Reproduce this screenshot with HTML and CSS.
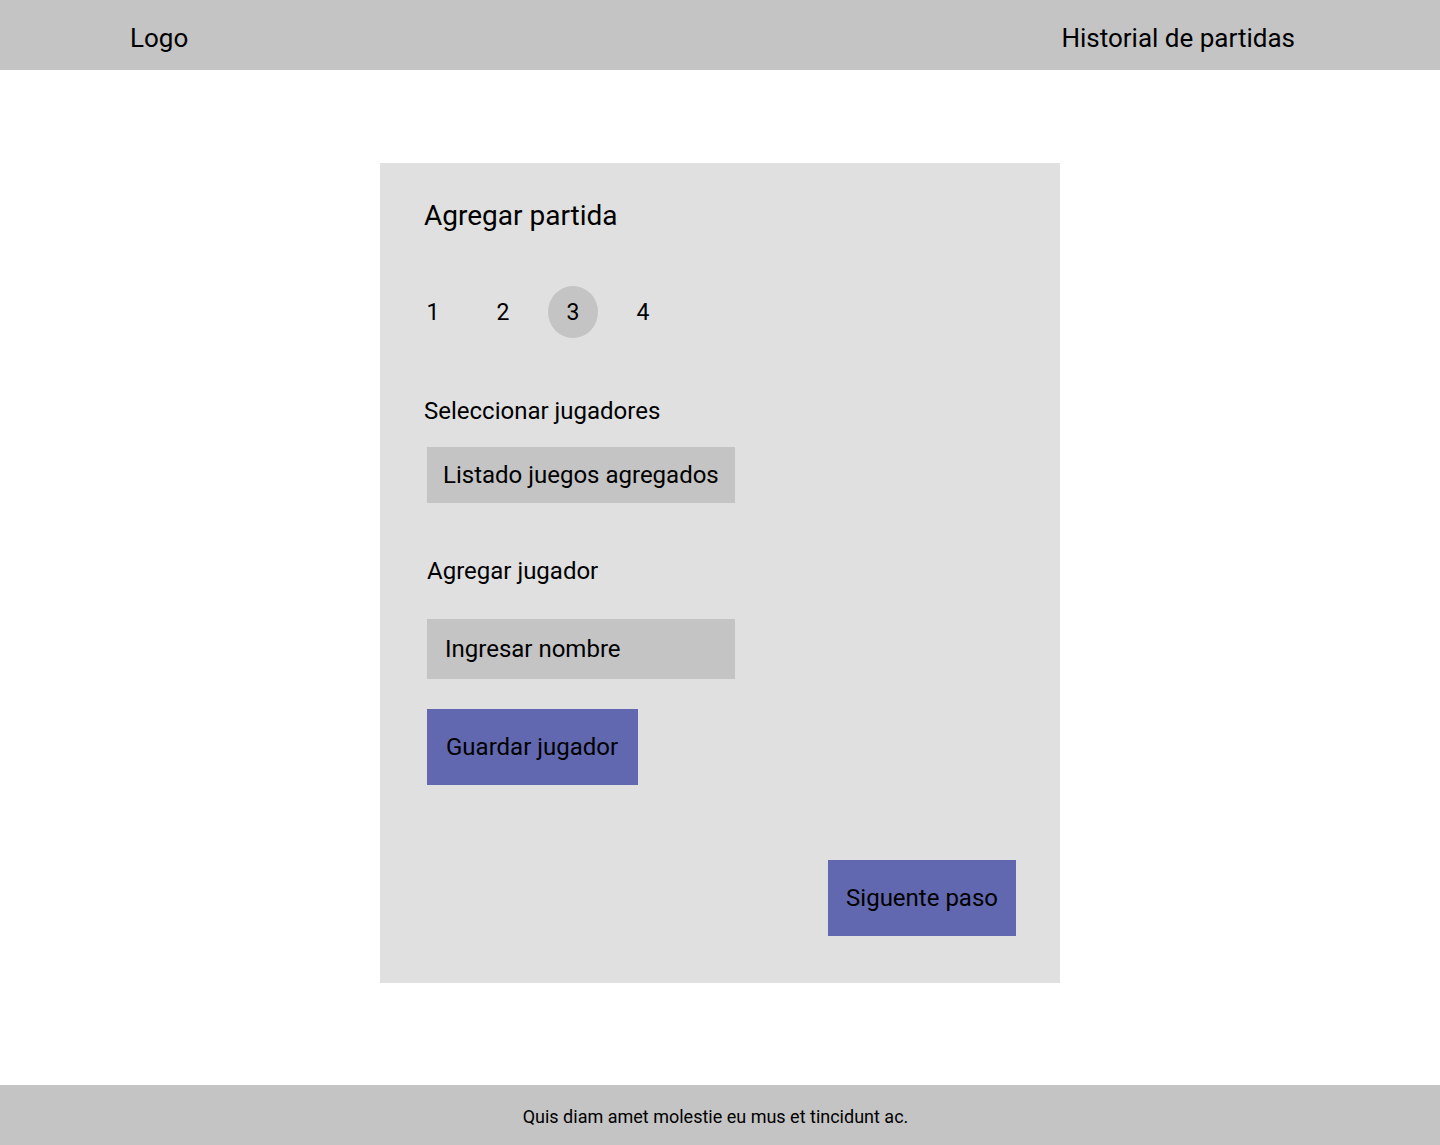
FILE: index.html
```html
<!DOCTYPE html>
<html lang="es">
<head>
<meta charset="utf-8">
<title>Agregar partida</title>
<link rel="stylesheet" href="styles.css">
</head>
<body>
<header class="topbar">
  <div class="logo">Logo</div>
  <nav class="nav"><a class="nav-link" href="#">Historial de partidas</a></nav>
</header>
<main class="main">
  <section class="card">
    <h1 class="card-title">Agregar partida</h1>
    <ol class="steps">
      <li class="step">1</li>
      <li class="step">2</li>
      <li class="step step-active">3</li>
      <li class="step">4</li>
    </ol>
    <h2 class="label">Seleccionar jugadores</h2>
    <div class="select-box">Listado juegos agregados</div>
    <h2 class="label label-add">Agregar jugador</h2>
    <div class="input-box">Ingresar nombre</div>
    <button class="btn btn-save">Guardar jugador</button>
    <div class="card-actions">
      <button class="btn btn-next">Siguente paso</button>
    </div>
  </section>
</main>
<footer class="footer">Quis diam amet molestie eu mus et tincidunt ac.</footer>
</body>
</html>
```
FILE: styles.css
```css
* { box-sizing: border-box; }
html, body { margin: 0; padding: 0; }
body {
  font-family: Roboto, "Liberation Sans", sans-serif;
  color: #000;
  background: #fff;
  min-height: 100vh;
  display: flex;
  flex-direction: column;
}
.topbar {
  height: 70px;
  background: #c4c4c4;
  display: flex;
  align-items: center;
  justify-content: space-between;
  padding: 5px 145px 0 130px;
  font-size: 26px;
}
.nav-link { color: #000; text-decoration: none; }
.main {
  flex: 1;
  display: flex;
  justify-content: center;
  align-items: flex-start;
  padding-top: 93px;
}
.card {
  width: 680px;
  height: 820px;
  background: #e0e0e0;
  padding: 37px 44px 0 44px;
  display: flex;
  flex-direction: column;
  align-items: flex-start;
}
.card-title {
  margin: 0;
  font-size: 28px;
  font-weight: 400;
  line-height: 32px;
}
.steps {
  list-style: none;
  margin: 54px 0 0 -16px;
  padding: 0;
  display: flex;
  gap: 20px;
}
.step {
  width: 50px;
  height: 52px;
  border-radius: 50%;
  display: flex;
  align-items: center;
  justify-content: center;
  font-size: 23px;
}
.step-active { background: #c4c4c4; }
.label {
  margin: 58px 0 0 0;
  font-size: 24px;
  font-weight: 400;
  line-height: 30px;
}
.label-add { margin-top: 53px; margin-left: 3px; }
.select-box {
  margin: 21px 0 0 3px;
  width: 308px;
  height: 56px;
  background: #c4c4c4;
  display: flex;
  align-items: center;
  padding-left: 16px;
  font-size: 24px;
}
.input-box {
  margin: 33px 0 0 3px;
  width: 308px;
  height: 60px;
  background: #c4c4c4;
  display: flex;
  align-items: center;
  padding-left: 18px;
  font-size: 24px;
}
.btn {
  border: 0;
  background: #6268b0;
  color: #000;
  font-family: inherit;
  font-size: 24px;
  height: 76px;
  padding: 0 18px;
  cursor: pointer;
}
.btn-save { margin: 30px 0 0 3px; padding: 0 20px 0 19px; }
.card-actions {
  align-self: stretch;
  display: flex;
  justify-content: flex-end;
  margin-top: 75px;
}
.footer {
  height: 60px;
  background: #c4c4c4;
  display: flex;
  align-items: center;
  justify-content: center;
  font-size: 18px;
  padding: 3px 9px 0 0;
}
```
